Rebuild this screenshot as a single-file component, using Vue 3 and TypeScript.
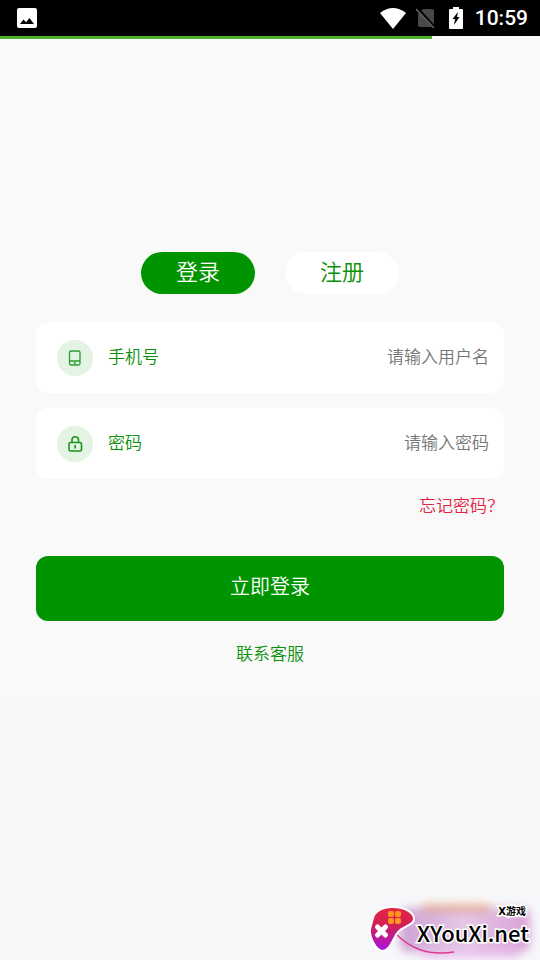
<script setup lang="ts">
import { ref } from 'vue'

type Mode = 'login' | 'register'

const mode = ref<Mode>('login')
const username = ref('')
const password = ref('')
const progress = ref(80)
</script>

<template>
  <div class="screen">
    <header class="status">
      <svg class="photo" viewBox="0 0 20 20" aria-hidden="true">
        <rect width="20" height="20" rx="2" fill="#fff" />
        <path d="M3 16 6.5 11.5 9 14.3 12.5 10 17 16Z" fill="#000" />
      </svg>
      <div class="indicators">
        <svg class="wifi" viewBox="0 0 26 21" aria-hidden="true">
          <path d="M0 5Q13-5 26 5L13 21Z" fill="#fff" />
        </svg>
        <svg class="sim" viewBox="0 0 20 22" aria-hidden="true">
          <path d="M7 2H16Q18 2 18 4V20H4Q2 20 2 18V7Z" fill="#484848" />
          <path d="M1 1 19 21" stroke="#000" stroke-width="3" />
          <path d="M0 2 18 21" stroke="#606060" stroke-width="1.6" />
        </svg>
        <svg class="battery" viewBox="0 0 14 22" aria-hidden="true">
          <path d="M4 0H10V2H13Q14 2 14 3V21Q14 22 13 22H1Q0 22 0 21V3Q0 2 1 2H4Z" fill="#fff" />
          <path d="M9 5 3.5 12H6L5 18L10.5 10H8Z" fill="#000" />
        </svg>
        <time class="clock">10:59</time>
      </div>
    </header>
    <div class="progress"><div class="bar" :style="{ width: progress + '%' }"></div></div>

    <main class="content">
      <nav class="tabs">
        <button type="button" class="tab" :class="{ active: mode === 'login' }" @click="mode = 'login'">登录</button>
        <button type="button" class="tab" :class="{ active: mode === 'register' }" @click="mode = 'register'">注册</button>
      </nav>

      <form class="form" @submit.prevent>
        <div class="field">
          <span class="badge">
            <svg viewBox="0 0 18 18" fill="none" stroke="#2c9c2c" stroke-width="1.3" aria-hidden="true">
              <rect x="3.5" y="2" width="10.5" height="14" rx="1.5" />
              <path d="M3.5 12H14M7.8 14H9.8" />
            </svg>
          </span>
          <label for="username">手机号</label>
          <input id="username" v-model="username" type="text" placeholder="请输入用户名" />
        </div>
        <div class="field">
          <span class="badge">
            <svg viewBox="0 0 18 18" fill="none" stroke="#199619" stroke-width="1.6" aria-hidden="true">
              <rect x="3" y="7.5" width="12.5" height="8.5" rx="1.5" />
              <path d="M6 7.5V4.8Q6 1.8 9.2 1.8T12.5 4.8V7.5M9.2 10V13.5" />
            </svg>
          </span>
          <label for="password">密码</label>
          <input id="password" v-model="password" type="password" placeholder="请输入密码" />
        </div>
        <a class="forgot" href="#forgot">忘记密码？</a>
        <button class="submit" type="submit">立即登录</button>
      </form>
      <a class="service" href="#service">联系客服</a>
    </main>

    <aside class="watermark">
      <svg class="glow" viewBox="0 0 180 65" aria-hidden="true">
        <defs>
          <filter id="soft" x="-20%" y="-40%" width="140%" height="180%"><feGaussianBlur stdDeviation="5" /></filter>
          <linearGradient id="haze" x2="1" y2="0">
            <stop stop-color="#a85bb5" />
            <stop offset=".5" stop-color="#d6a0d4" />
            <stop offset="1" stop-color="#c05ab8" />
          </linearGradient>
          <linearGradient id="pad" x2="0" y2="1">
            <stop stop-color="#e5263c" />
            <stop offset=".45" stop-color="#cf1f5c" />
            <stop offset="1" stop-color="#a516e0" />
          </linearGradient>
        </defs>
        <g filter="url(#soft)">
          <rect x="40" y="13" width="130" height="44" rx="8" fill="url(#haze)" opacity=".55" />
          <path d="M62 13H130" stroke="#e08a50" stroke-width="7" opacity=".65" />
          <path d="M62 60H160" stroke="#e8a8ee" stroke-width="6" opacity=".7" />
        </g>
        <path d="M36 39C50 53 67 61 94 57" fill="none" stroke="#dc3d91" stroke-width="1.6" />
        <path d="M14 20C18 14 24 12 32 12C44 12 54 17 54 24C54 30 44 31 39 36C33 42 31 55 23 56C16 56 9 42 10 34Q12 26 14 20Z" fill="url(#pad)" stroke="#fff" stroke-width="2" />
        <g fill="#ff941e">
          <rect x="28" y="16" width="6" height="6" rx="2" /><rect x="35" y="16" width="6" height="6" rx="2" />
          <rect x="28" y="23" width="6" height="6" rx="2" /><rect x="35" y="23" width="6" height="6" rx="2" />
        </g>
        <path d="M17.5 32 25.5 40M25.5 32 17.5 40" stroke="#fff" stroke-width="5" stroke-linecap="round" />
      </svg>
      <div class="brand">
        <span class="brand-small">X游戏</span>
        <span class="brand-name">XYouXi.net</span>
      </div>
    </aside>
  </div>
</template>

<style>
body {
  background: #f7f8fa;
}
</style>

<style scoped>
.screen {
  position: relative;
  min-height: 100vh;
  font-family: 'Noto Sans CJK SC', sans-serif;
  font-weight: 350;
  background: #f7f8fa;
}

.screen * {
  box-sizing: border-box;
}

.status {
  display: flex;
  align-items: center;
  justify-content: space-between;
  height: 36px;
  padding: 0 12px 0 17px;
  background: #000;
}

.photo {
  width: 20px;
  height: 20px;
}

.indicators {
  display: flex;
  align-items: center;
}

.wifi {
  width: 26px;
  height: 21px;
  margin-right: 10px;
}

.sim {
  width: 20px;
  height: 22px;
  margin-right: 13px;
}

.battery {
  width: 14px;
  height: 22px;
  margin-right: 12px;
}

.clock {
  color: #fff;
  font: 500 21px/36px Roboto, sans-serif;
}

.progress {
  height: 3px;
  background: #f9f9f9;
}

.bar {
  height: 100%;
  background: #4eb22c;
}

.content {
  display: flex;
  flex-direction: column;
  padding: 213px 36px 32px;
  background: #f9f9f9;
}

.tabs {
  display: flex;
  justify-content: center;
  gap: 30px;
}

button {
  border: 0;
  font-family: inherit;
  font-weight: inherit;
  cursor: pointer;
}

.tab {
  width: 114px;
  height: 42px;
  padding: 0 0 6px;
  border-radius: 21px;
  background: #fff;
  color: #089008;
  font-size: 22px;
  line-height: 36px;
}

.tab.active {
  background: #009400;
  color: #fff;
}

.form {
  display: flex;
  flex-direction: column;
  margin-top: 28px;
}

.field {
  display: flex;
  align-items: center;
  height: 71px;
  margin-bottom: 15px;
  padding: 0 15px 0 21px;
  border-radius: 12px;
  background: #fff;
}

.badge {
  display: flex;
  align-items: center;
  justify-content: center;
  flex: none;
  width: 36px;
  height: 36px;
  margin-right: 15px;
  border-radius: 50%;
  background: #e3f3e4;
}

.badge svg {
  width: 18px;
  height: 18px;
}

label {
  flex: none;
  padding-bottom: 4px;
  color: #089008;
  font-size: 17px;
  line-height: 24px;
}

input {
  flex: 1;
  min-width: 0;
  height: 28px;
  padding: 0 0 4px;
  border: 0;
  outline: 0;
  background: transparent;
  color: #333;
  font-family: inherit;
  font-size: 17px;
  font-weight: inherit;
  text-align: right;
}

input::placeholder {
  color: #757575;
  opacity: 1;
}

.forgot {
  align-self: flex-end;
  color: #e3243f;
  font-size: 17px;
  line-height: 22px;
  text-decoration: none;
}

.submit {
  height: 65px;
  margin-top: 40px;
  padding: 0 0 6px;
  border-radius: 12px;
  background: #009400;
  color: #fff;
  font-size: 20px;
}

.service {
  align-self: center;
  margin-top: 20px;
  color: #089008;
  font-size: 17px;
  line-height: 24px;
  text-decoration: none;
}

.watermark {
  position: absolute;
  right: 0;
  bottom: 0;
  width: 180px;
  height: 65px;
}

.glow {
  display: block;
  width: 100%;
  height: 100%;
}

.brand {
  position: absolute;
  right: 11px;
  bottom: 15px;
  display: flex;
  flex-direction: column;
  align-items: flex-end;
  color: #000;
  font-weight: 700;
  white-space: nowrap;
  -webkit-text-stroke: 3px #fff;
  paint-order: stroke fill;
}

.brand-small {
  padding-right: 3px;
  font-family: 'DejaVu Sans', 'Noto Sans CJK SC', sans-serif;
  font-size: 10px;
  line-height: 14px;
}

.brand-name {
  font-size: 22px;
  font-weight: 500;
  line-height: 26px;
}
</style>
